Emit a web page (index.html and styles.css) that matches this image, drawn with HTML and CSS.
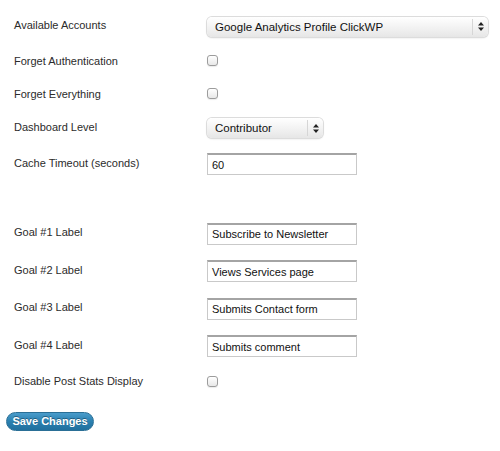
FILE: index.html
```html
<!DOCTYPE html>
<html>
<head>
<meta charset="utf-8">
<link rel="stylesheet" href="styles.css">
</head>
<body>
<form class="settings">
  <div class="row row-sel1">
    <div class="label">Available Accounts</div>
    <div class="ctl">
      <div class="select select-wide">
        <span class="sel-text">Google Analytics Profile ClickWP</span>
        <span class="sel-arrows"><svg width="6" height="9" viewBox="0 0 6 9"><path d="M3 0 L6 3.5 H0 Z M0 5.5 H6 L3 9 Z" fill="#222"/></svg></span>
      </div>
    </div>
  </div>
  <div class="row row-check">
    <div class="label">Forget Authentication</div>
    <div class="ctl"><span class="checkbox"></span></div>
  </div>
  <div class="row row-check">
    <div class="label">Forget Everything</div>
    <div class="ctl"><span class="checkbox"></span></div>
  </div>
  <div class="row row-sel2">
    <div class="label">Dashboard Level</div>
    <div class="ctl">
      <div class="select select-narrow">
        <span class="sel-text">Contributor</span>
        <span class="sel-arrows"><svg width="6" height="9" viewBox="0 0 6 9"><path d="M3 0 L6 3.5 H0 Z M0 5.5 H6 L3 9 Z" fill="#222"/></svg></span>
      </div>
    </div>
  </div>
  <div class="row row-input">
    <div class="label">Cache Timeout (seconds)</div>
    <div class="ctl"><div class="input">60</div></div>
  </div>
  <div class="spacer"></div>
  <div class="row row-goal">
    <div class="label">Goal #1 Label</div>
    <div class="ctl"><div class="input">Subscribe to Newsletter</div></div>
  </div>
  <div class="row row-goal">
    <div class="label">Goal #2 Label</div>
    <div class="ctl"><div class="input">Views Services page</div></div>
  </div>
  <div class="row row-goal">
    <div class="label">Goal #3 Label</div>
    <div class="ctl"><div class="input">Submits Contact form</div></div>
  </div>
  <div class="row row-goal">
    <div class="label">Goal #4 Label</div>
    <div class="ctl"><div class="input">Submits comment</div></div>
  </div>
  <div class="row row-check2">
    <div class="label">Disable Post Stats Display</div>
    <div class="ctl"><span class="checkbox"></span></div>
  </div>
  <div class="submit">
    <span class="button">Save Changes</span>
  </div>
</form>
</body>
</html>
```

FILE: styles.css
```css
html, body {
  margin: 0;
  padding: 0;
  background: #fff;
}
body {
  font-family: "Liberation Sans", Arial, sans-serif;
  font-size: 11px;
  color: #2b2b2b;
}
.settings {
  padding-top: 9px;
  display: flex;
  flex-direction: column;
}
.row {
  display: grid;
  grid-template-columns: 193px 1fr;
  padding-left: 14px;
  align-items: center;
}
.row-sel1 { height: 35px; }
.row-check { height: 33px; }
.row-sel2 { height: 36px; }
.row-input { height: 36px; }
.spacer { height: 33px; }
.row-goal { height: 37.5px; }
.row-check2 { height: 32px; }
.label {
  line-height: 14px;
}
.row-sel1 .label, .row-sel2 .label { margin-top: -3px; }
.row-input .label, .row-goal .label { margin-top: -3px; }

.select {
  box-sizing: border-box;
  height: 20px;
  display: flex;
  align-items: center;
  border-radius: 5px;
  background: linear-gradient(#ffffff, #f3f3f3 50%, #e6e6e6);
  box-shadow: 0 0 0 1px #dcdcdc, 0 1px 2px rgba(0,0,0,0.15);
  color: #111;
  font-size: 11.5px;
}
.select-wide { width: 281px; }
.select-narrow { width: 116px; }
.sel-text {
  flex: 1;
  padding-left: 8px;
  white-space: nowrap;
}
.sel-arrows {
  width: 15px;
  height: 16px;
  border-left: 1px solid #d6d6d6;
  display: flex;
  align-items: center;
  justify-content: center;
}
.checkbox {
  display: block;
  box-sizing: border-box;
  width: 11px;
  height: 11px;
  border: 1px solid #9c9c9c;
  border-radius: 3px;
  background: linear-gradient(#ffffff, #e8e8e8);
  box-shadow: 0 1px 1px rgba(0,0,0,0.08);
}
.input {
  box-sizing: border-box;
  width: 150px;
  height: 22px;
  padding: 0 4px;
  border: 1px solid #c9c9c9;
  border-top: 2px solid #a4a4a4;
  display: flex;
  align-items: center;
  color: #111;
  background: #fff;
  white-space: nowrap;
}
.submit {
  padding-top: 15px;
  padding-left: 6px;
}
.button {
  display: inline-block;
  box-sizing: border-box;
  width: 88px;
  height: 19px;
  line-height: 17px;
  text-align: center;
  border-radius: 10px;
  border: 1px solid #2a6f96;
  background: linear-gradient(#4a9ccb, #2a80b0 50%, #21709e);
  color: #fff;
  font-weight: bold;
  font-size: 11px;
  text-shadow: 0 -1px 0 rgba(0,0,0,0.35);
}
```
